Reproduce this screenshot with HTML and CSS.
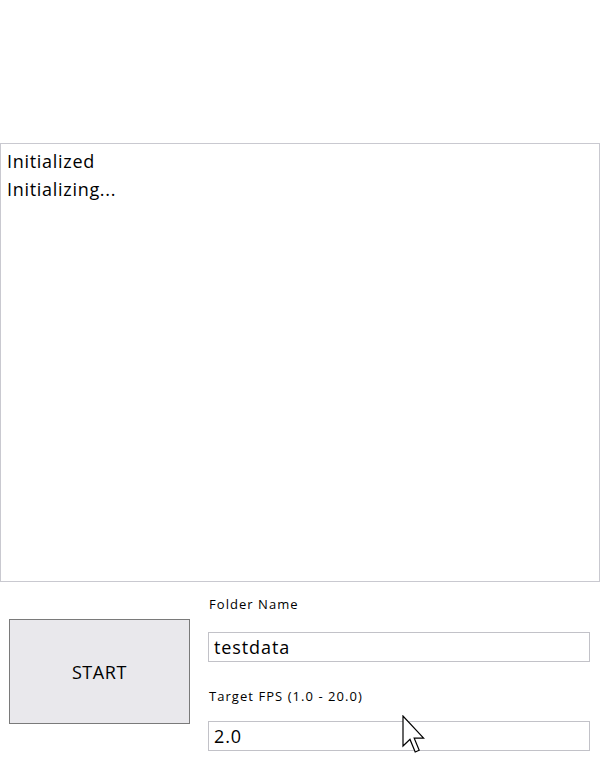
FILE: index.html
```html
<!DOCTYPE html>
<html>
<head>
<meta charset="utf-8">
<link rel="stylesheet" href="styles.css">
</head>
<body>
<div class="app">
  <div class="log">
    <div class="log-line">Initialized</div>
    <div class="log-line">Initializing...</div>
  </div>
  <div class="controls">
    <button class="start">START</button>
    <div class="fields">
      <div class="label">Folder Name</div>
      <div class="input first">testdata</div>
      <div class="label second">Target FPS (1.0 - 20.0)</div>
      <div class="input">2.0</div>
    </div>
  </div>
  <svg class="cursor" width="24" height="40" viewBox="0 0 12 20">
    <path d="M0.5 0.5 L0.5 15.5 L4 12.2 L6.6 18.5 L8.6 17.6 L6.1 11.6 L10.8 11.6 Z" fill="#fff" stroke="#000" stroke-width="0.6" stroke-linejoin="miter"/>
  </svg>
</div>
</body>
</html>
```
FILE: styles.css
```css
html, body {
  margin: 0;
  padding: 0;
  background: #ffffff;
}
body {
  font-family: "Open Sans", "Noto Sans", sans-serif;
  color: #000;
}
.app {
  position: relative;
  width: 600px;
  height: 761px;
  padding-top: 143px;
  box-sizing: border-box;
}
.log {
  width: 600px;
  height: 439px;
  box-sizing: border-box;
  border: 1px solid #c9c9d0;
  padding: 3px 6px;
}
.log-line {
  font-size: 18px;
  line-height: 28px;
  letter-spacing: 0.7px;
  color: #000;
}
.controls {
  display: flex;
  align-items: flex-start;
  padding-left: 9px;
}
.start {
  margin-top: 37px;
  width: 181px;
  height: 105px;
  box-sizing: border-box;
  border: 1px solid #7a7a7a;
  background: #e9e8ec;
  font-family: "Open Sans", "Noto Sans", sans-serif;
  font-size: 18px;
  letter-spacing: 0.6px;
  color: #000;
  padding: 0;
}
.fields {
  margin-left: 18px;
  width: 382px;
  padding-top: 12px;
}
.label {
  font-size: 13px;
  line-height: 20px;
  height: 20px;
  color: #000;
  letter-spacing: 1.05px;
  padding-left: 1px;
}
.label.second {
  margin-top: 24px;
}
.input {
  height: 30px;
  box-sizing: border-box;
  border: 1px solid #c2c2c8;
  padding: 0 5px;
  font-size: 18px;
  line-height: 28px;
  letter-spacing: 0.9px;
  color: #000;
}
.input.first {
  margin-top: 18px;
}
.label.second + .input {
  margin-top: 15px;
}
.cursor {
  position: absolute;
  left: 402px;
  top: 715px;
}
```
